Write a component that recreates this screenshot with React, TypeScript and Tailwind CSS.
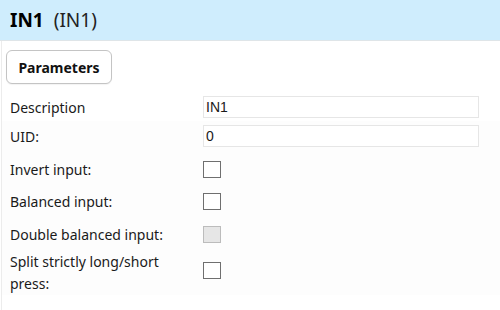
import React, { useState } from 'react';

const font = { fontFamily: '"Segoe UI", "Noto Sans", sans-serif' };

function Checkbox({ checked, disabled, onChange, className = '' }: { checked?: boolean; disabled?: boolean; onChange?: () => void; className?: string }) {
  return (
    <button
      type="button"
      disabled={disabled}
      onClick={onChange}
      className={
        (disabled
          ? 'w-[18px] h-[17px] border border-[#bcbcbc] bg-[#e6e6e6] '
          : 'w-[18px] h-[17px] border border-[#6f6f6f] bg-white ') + className
      }
    >
      {checked && <span className="block text-[11px] leading-none text-[#333]">✓</span>}
    </button>
  );
}

export default function App() {
  const [invert, setInvert] = useState(false);
  const [balanced, setBalanced] = useState(false);
  const [split, setSplit] = useState(false);

  return (
    <div className="w-[500px] h-[310px] bg-white text-[#1a1a1a] overflow-hidden" style={font}>
      {/* Header */}
      <div className="h-[41px] bg-[#cfedfd] border-b border-[#dfe5e8] flex items-center pl-[10px] gap-[10px]">
        <span className="text-[19px] font-bold text-black">IN1</span>
        <span className="text-[19px] text-[#222]">(IN1)</span>
      </div>

      <div className="border-l border-[#ececec] ml-[1px] h-[269px]">
        {/* Tab button */}
        <div className="pt-[9px] pl-[4px] pb-[9px]">
          <button className="h-[34px] w-[106px] rounded-[6px] border border-[#c4c4c4] bg-white text-[14px] font-bold text-[#111] shadow-[0_1px_1px_rgba(0,0,0,0.05)]">
            Parameters
          </button>
        </div>

        {/* Fields */}
        <div className="pl-[8px] pr-[21px] text-[14px]">
          <div className="flex items-center h-[28px]">
            <span className="w-[193px]">Description</span>
            <input
              defaultValue="IN1"
              className="flex-1 h-[22px] border border-[#e6e6e6] px-[2px] text-[14px] outline-none"
              style={{ fontFamily: '"Liberation Sans", Arial, sans-serif' }}
            />
          </div>
        </div>
        <div className="bg-[#fdfdfd] pl-[8px] pr-[21px] text-[14px]">
          <div className="flex items-center h-[30px]">
            <span className="w-[193px]">UID:</span>
            <input
              defaultValue="0"
              className="flex-1 h-[22px] border border-[#e6e6e6] bg-white px-[2px] text-[14px] outline-none"
              style={{ fontFamily: '"Liberation Sans", Arial, sans-serif' }}
            />
          </div>
          <div className="flex items-center h-[32px] mt-[2px]">
            <span className="w-[193px]">Invert input:</span>
            <Checkbox checked={invert} onChange={() => setInvert(!invert)} />
          </div>
          <div className="flex items-center h-[32px]">
            <span className="w-[193px]">Balanced input:</span>
            <Checkbox checked={balanced} onChange={() => setBalanced(!balanced)} />
          </div>
          <div className="flex items-center h-[34px]">
            <span className="w-[193px]">Double balanced input:</span>
            <Checkbox disabled />
          </div>
          <div className="flex items-center h-[44px]">
            <span className="w-[193px] leading-[22px] pr-[30px]">Split strictly long/short press:</span>
            <Checkbox className="mb-[5px]" checked={split} onChange={() => setSplit(!split)} />
          </div>
        </div>
      </div>
    </div>
  );
}
